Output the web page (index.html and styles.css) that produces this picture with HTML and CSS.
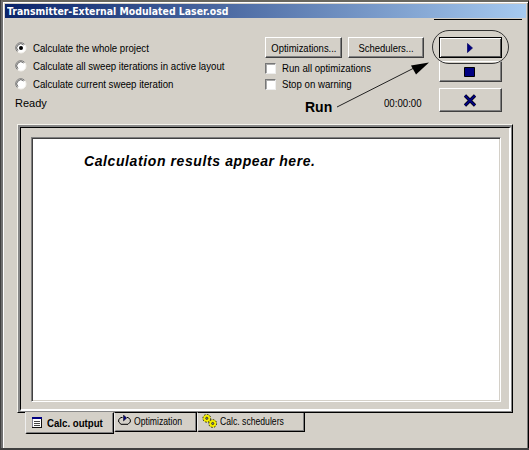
FILE: index.html
```html
<!DOCTYPE html>
<html lang="en">
<head>
<meta charset="utf-8">
<title>Transmitter-External Modulated Laser.osd</title>
<link rel="stylesheet" href="styles.css">
</head>
<body>
<main class="window">
  <header class="titlebar"><span class="title">Transmitter-External Modulated Laser.osd</span></header>
  <section class="controls">
    <div class="modes">
      <label class="radio"><svg width="12" height="12" viewBox="0 0 12 12"><use href="#radio"/><circle cx="6" cy="6" r="2"/></svg><span class="narrow">Calculate the whole project</span></label>
      <label class="radio"><svg width="12" height="12" viewBox="0 0 12 12"><use href="#radio"/></svg><span class="narrow">Calculate all sweep iterations in active layout</span></label>
      <label class="radio"><svg width="12" height="12" viewBox="0 0 12 12"><use href="#radio"/></svg><span class="narrow">Calculate current sweep iteration</span></label>
      <div class="status"><span>Ready</span></div>
    </div>
    <div class="options">
      <div class="buttons">
        <button class="btn wide"><span class="narrow center">Optimizations...</span></button>
        <button class="btn"><span class="narrow center">Schedulers...</span></button>
      </div>
      <label class="check"><i class="box"></i><span class="narrow">Run all optimizations</span></label>
      <label class="check"><i class="box"></i><span class="narrow">Stop on warning</span></label>
      <div class="clock"><span class="narrow">00:00:00</span></div>
    </div>
    <div class="actions">
      <button class="btn act play"><svg width="6" height="10" viewBox="0 0 6 10"><path d="M.5 .5L5.500 5L.5 9.500Z" fill="#000080" stroke="#000060" stroke-width=".7"/></svg></button>
      <button class="btn act stop"><svg width="11" height="10" viewBox="0 0 11 10"><path d="M.5 .5H10.500V9.500H.5Z" fill="#000080" stroke="#000"/></svg></button>
      <button class="btn act cancel"><svg width="14" height="13" viewBox="0 0 14 13"><path d="M2 1.500L12 11.500M12 1.500L2 11.500" stroke="#000" stroke-width="3.200"/><path d="M2 1.500L12 11.500M12 1.500L2 11.500" stroke="#000080" stroke-width="2"/></svg></button>
    </div>
  </section>
  <section class="frame"><div class="frame-mid"><div class="frame-in"><div class="output"><p class="note">Calculation results appear here.</p></div></div></div></section>
  <nav class="tabs">
    <div class="tab active"><svg width="11" height="12" viewBox="0 0 11 12" shape-rendering="crispEdges"><path d="M.5 .5H9.500V10.500H.5Z" fill="#fff" stroke="#808090"/><path d="M0 0H10V2H0Z" fill="#000080"/><path d="M9.500 2V10.500H0" fill="none" stroke="#111"/><path d="M2 4.500H8M2 6.500H8M2 8.500H8" stroke="#444"/></svg><span class="narrow">Calc. output</span></div>
    <div class="tab opt"><svg width="14" height="12" viewBox="0 0 14 12"><path d="M4.500 2.500H3L.7 4.500V7L3 9.300H10L12.300 7V4.500L10 2.500H9" fill="none" stroke="#000"/><path d="M5.500 0V6L8.700 3Z" fill="#000080" stroke="#000" stroke-width=".5"/></svg><span class="tight">Optimization</span></div>
    <div class="tab sched"><svg width="16" height="14" viewBox="0 0 16 14"><g fill="#f4ee00" stroke="#222"><circle cx="4.800" cy="4.300" r="3.900" stroke-dasharray="1.600 1.400"/><circle cx="10.700" cy="9.500" r="3.900" stroke-dasharray="1.600 1.400"/></g><g fill="#888" stroke="#222" stroke-width=".8"><circle cx="4.800" cy="4.300" r="1.100"/><circle cx="10.700" cy="9.500" r="1.100"/></g></svg><span class="tight">Calc. schedulers</span></div>
  </nav>
</main>
<svg class="annotation" width="529" height="450" viewBox="0 0 529 450">
  <defs><g id="radio"><circle cx="6" cy="6" r="5" fill="#fff" stroke="#f5f3ee"/><path d="M2.400 9.600A5.100 5.100 0 1 1 9.600 2.400" fill="none" stroke="#777"/><path d="M3 8.700A4 4 0 1 1 8.700 3" fill="none" stroke="#444" stroke-width=".8"/></g></defs>
  <path d="M434 19.500H522" stroke="#000"/>
  <rect x="432.500" y="30.500" width="76" height="33" rx="16.500" fill="none" stroke="#333"/>
  <path d="M337 107L415 67.500" stroke="#222"/>
  <path d="M429 62.500L416 74.500L411 65.500Z"/>
</svg>
<div class="run">Run</div>
</body>
</html>
```
FILE: styles.css
```css
* { box-sizing: border-box; }
body { margin: 0; width: 529px; height: 450px; overflow: hidden; background: #404040; font: 11px/14px "Liberation Sans", sans-serif; color: #000; }
.window { width: 528px; height: 448px; margin-left: 1px; background: #d4d0c8; border: solid; border-width: 2px 1px 0 2px; border-color: #69675f #000 #404040 #707070; box-shadow: inset 1px 1px #fff, inset -1px 0 #777; padding: 2px 2px 0 2px; }
.titlebar { width: 521px; height: 14px; background: linear-gradient(90deg, #0a246a, #a6caf0); color: #fff; padding-left: 2px; font: bold 11px/15px "DejaVu Sans", sans-serif; }
span { display: inline-block; white-space: nowrap; }
.title { transform: scaleX(.85); transform-origin: left; }
.narrow { transform: scaleX(.877); transform-origin: left; }
.tight { transform: scaleX(.785); transform-origin: left; }
.center { transform: scaleX(.86); transform-origin: center; }
svg { display: block; flex: none; }
.controls { display: flex; height: 106px; }
.modes { width: 260px; padding: 23px 0 0 10px; }
.radio { display: flex; align-items: center; height: 14px; gap: 6px; margin-bottom: 4px; }
.status { height: 14px; margin-top: 5px; }
.options { width: 162px; padding-top: 19px; }
.buttons { display: flex; gap: 6px; margin-bottom: 3px; }
.btn { display: flex; align-items: center; justify-content: center; width: 76px; height: 21px; padding: 0; background: #d4d0c8; border: 1px solid; border-color: #fff #404040 #404040 #fff; box-shadow: inset -1px -1px #808080; font: inherit; color: #000; }
.wide { width: 77px; }
.check { display: flex; align-items: center; height: 14px; gap: 6px; margin-bottom: 2px; }
.box { width: 11px; height: 11px; background: #fff; border: 1px solid; border-color: #777 #eee #eee #777; box-shadow: inset 1px 1px #aaa; }
.clock { margin: 5px 0 0 119px; }
.actions { padding-top: 19px; margin-left: 12px; }
.act { width: 63px; padding-right: 2px; }
.play { border: 1px solid #000; box-shadow: inset 1px 1px #fff, inset -1px -1px #555; }
.stop { margin-top: 3px; height: 21px; }
.cancel { margin-top: 6px; height: 24px; }
.frame { width: 496px; height: 289px; margin-left: 12px; border: 1px solid; border-color: #f5f3ec #000 #000 #f5f3ec; }
.frame-mid { height: 287px; border: solid #888; border-width: 2px 1px 1px 2px; }
.frame-in { height: 284px; border: solid; border-width: 1px 2px 2px 1px; border-color: #000 #fff #fff #000; padding: 9px 8px 6px 10px; background: #d4d0c8; }
.output { width: 470px; height: 265px; border: 1px solid; border-color: #808080 #fff #fff #808080; box-shadow: inset 1px 1px #404040, inset -1px -1px #d4d0c8; background: #fff; padding: 15px 0 0 52px; }
.note { margin: 0; font: italic bold 14px/16px "Liberation Sans", sans-serif; letter-spacing: .6px; }
.tabs { display: flex; align-items: flex-start; margin: -1px 0 0 20px; }
.tab { position: relative; display: flex; align-items: center; height: 20px; padding-bottom: 2px; background: #d4d0c8; border: 1px solid; border-color: #000 #000 #000 #eee; border-bottom-left-radius: 2px; box-shadow: inset -1px -1px #808080; }
.active { width: 89px; height: 22px; padding-bottom: 1px; border-top-color: #d4d0c8; padding-left: 6px; gap: 4px; font-weight: bold; }
.opt { width: 83px; padding-left: 3px; gap: 2px; }
.sched { width: 108px; padding-left: 4px; gap: 2px; }
.annotation { position: absolute; left: 0; top: 0; }
.run { position: absolute; left: 305px; top: 99px; font: bold 14px/16px "Liberation Sans", sans-serif; }
```
